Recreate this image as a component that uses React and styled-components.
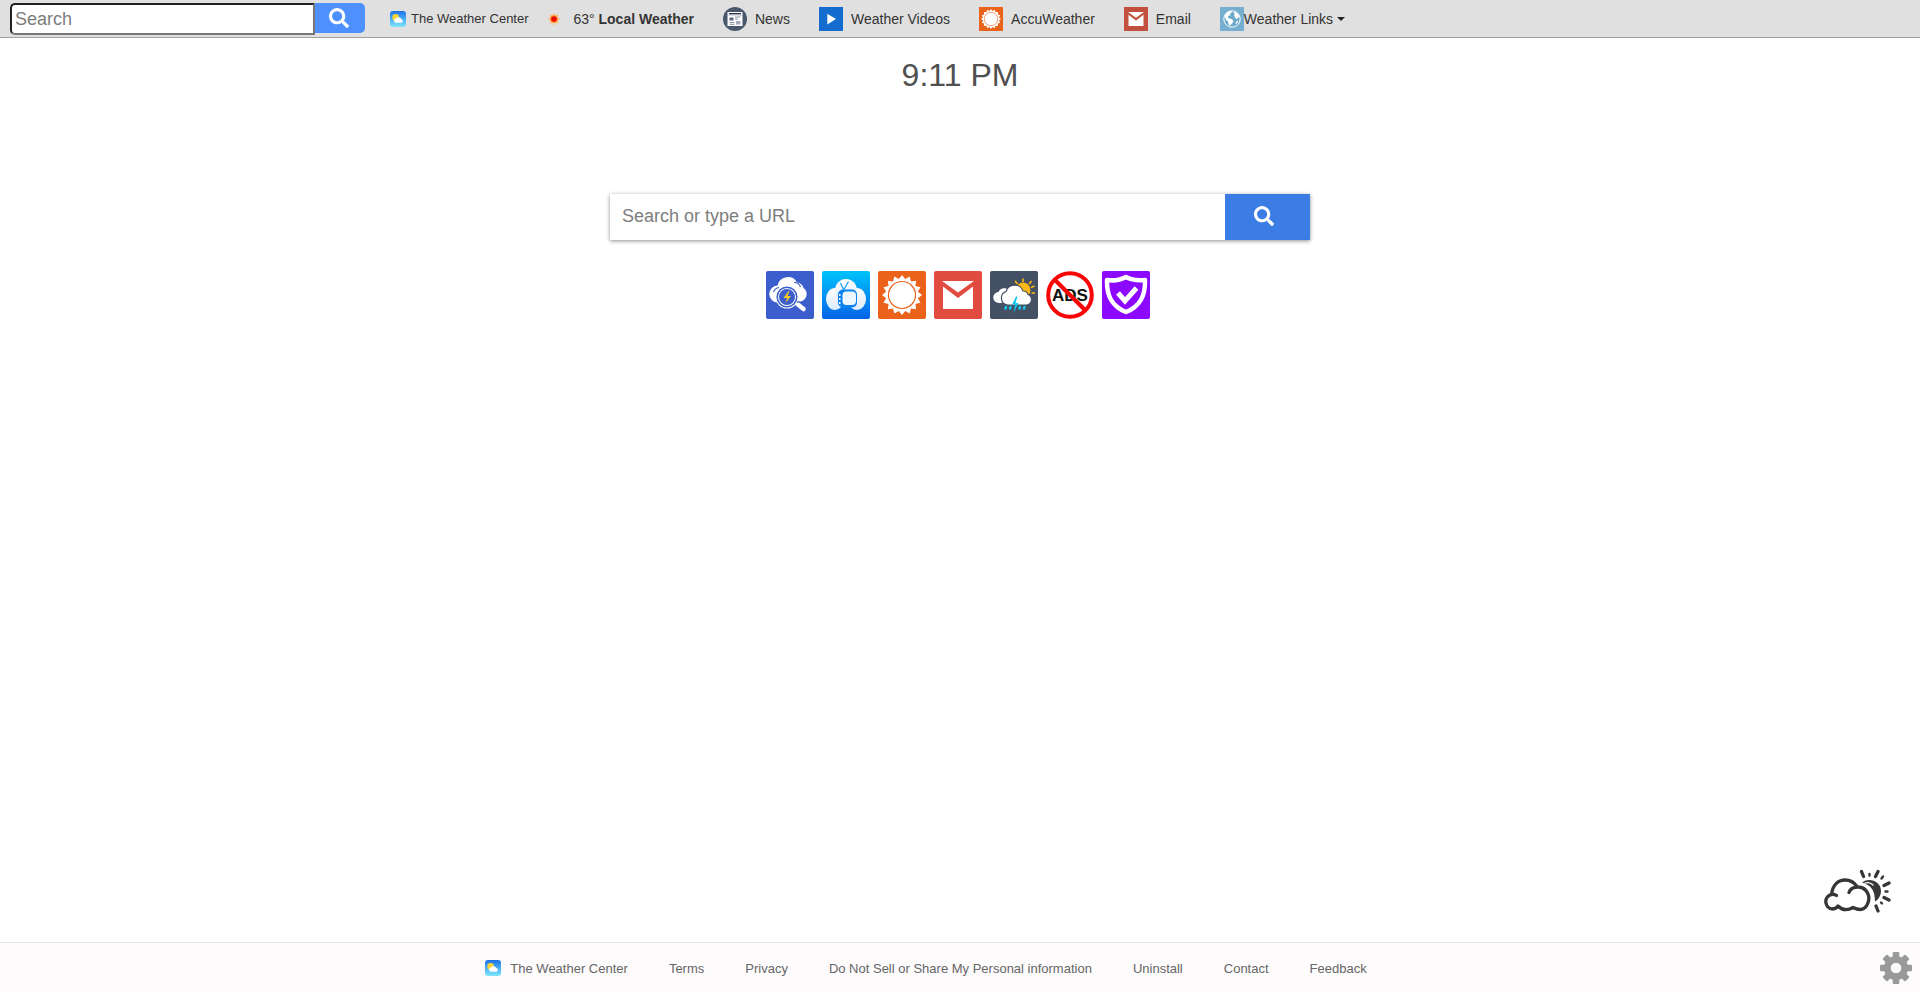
import React from 'react';
import styled, { createGlobalStyle } from 'styled-components';
import { FaSearch } from 'react-icons/fa';

const GlobalStyle = createGlobalStyle`
  * {
    box-sizing: border-box;
  }
  body {
    margin: 0;
    background-color: white;
    font-family: 'Liberation Sans', Arial, sans-serif;
  }
`;

const Page = styled.div`
  display: flex;
  flex-direction: column;
  min-height: 100vh;
`;

const Toolbar = styled.header`
  display: flex;
  align-items: center;
  height: 38px;
  padding-left: 10px;
  background-color: #e0e0e0;
  border-bottom: 1px solid #a0a0a0;
  color: #333;
`;

const BarForm = styled.form`
  display: flex;
  align-items: flex-start;
  margin-right: 25px;
`;

const BarInput = styled.input`
  width: 305px;
  height: 32px;
  padding: 2px 3px 0;
  border: 2px solid #767676;
  border-top-color: #212121;
  border-left-color: #212121;
  border-radius: 5px 0 0 5px;
  font-family: inherit;
  font-size: 18px;
  color: #333;
  &::placeholder {
    color: #7d7d7d;
  }
  &:focus {
    outline: none;
  }
`;

const BarButton = styled.button`
  display: flex;
  align-items: center;
  justify-content: center;
  width: 50px;
  height: 30px;
  padding: 0 2px 0 0;
  border: none;
  border-radius: 0 5px 5px 0;
  background-color: #4d90fe;
  color: white;
  font-size: 20px;
`;

const Brand = styled.a`
  display: flex;
  align-items: center;
  gap: ${props => props.$gap}px;
  color: inherit;
  font-size: 13px;
  text-decoration: none;
`;

const BarNav = styled.nav`
  display: flex;
  align-items: center;
  gap: 29px;
  margin-left: 17px;
`;

const BarLink = styled.a`
  display: flex;
  align-items: center;
  gap: ${props => (props.$tight ? 0 : 8)}px;
  color: #333;
  font-size: 14px;
  text-decoration: none;
  white-space: pre;
`;

const BarMenu = styled(BarLink).attrs({ as: 'button', type: 'button' })`
  padding: 0;
  border: none;
  background: none;
  font-family: inherit;
`;

const Caret = styled.span`
  margin-left: 4px;
  border: 4px solid transparent;
  border-top-color: #222;
  border-bottom: none;
`;

const Main = styled.main`
  flex: 1;
  display: flex;
  flex-direction: column;
  align-items: center;
`;

const Clock = styled.div`
  margin-top: 18px;
  color: #505050;
  font-size: 32px;
  line-height: 38px;
`;

const SearchForm = styled.form`
  display: flex;
  width: 700px;
  max-width: 100%;
  height: 46px;
  margin-top: 100px;
  box-shadow: 0 1px 4px rgba(0, 0, 0, 0.45);
`;

const SearchInput = styled.input`
  flex: 1;
  min-width: 0;
  padding: 0 12px 2px;
  border: none;
  font-family: inherit;
  font-size: 18px;
  color: #333;
  &::placeholder {
    color: #7d7d7d;
  }
  &:focus {
    outline: none;
  }
`;

const SearchButton = styled.button`
  display: flex;
  align-items: center;
  justify-content: center;
  width: 85px;
  padding: 0 8px 2px 0;
  border: none;
  background-color: #3b7de5;
  color: white;
  font-size: 20px;
`;

const Tiles = styled.div`
  display: flex;
  gap: 8px;
  margin-top: 31px;
  padding-right: 4px;
`;

const Tile = styled.a`
  width: 48px;
  height: 48px;
  border-radius: 2px;
  overflow: hidden;
`;

const Widget = styled.a`
  align-self: flex-end;
  margin: auto 29px 29px 0;
  line-height: 0;
`;

const Footer = styled.footer`
  display: flex;
  align-items: center;
  height: 51px;
  background-color: #fdfbfc;
  border-top: 1px solid #e5e5e5;
  color: #666;
`;

const FooterNav = styled.nav`
  flex: 1;
  display: flex;
  align-items: center;
  justify-content: center;
  gap: 41px;
  padding-right: 20px;
`;

const FooterLink = styled.a`
  color: inherit;
  font-size: 13px;
  text-decoration: none;
`;

const GearButton = styled.button`
  width: 48px;
  height: 48px;
  padding: 8px;
  border: none;
  background: none;
  line-height: 0;
`;

const Logo = ({ id }) => (
  <svg width="16" height="16" viewBox="0 0 16 16">
    <defs>
      <linearGradient id={id} x1="0" y1="0" x2="0" y2="1">
        <stop offset="0" stopColor="#1b70e6" />
        <stop offset="0.5" stopColor="#4aaef5" />
        <stop offset="1" stopColor="#80e6fb" />
      </linearGradient>
    </defs>
    <rect width="16" height="16" rx="3" fill={`url(#${id})`} />
    <circle cx="5.6" cy="6.4" r="3.3" fill="#fdd43a" />
    <path d="M6.200 11.800a2.200 2.200 0 0 1-.2-4.400A3 3 0 0 1 11.200 8a2 2 0 0 1 .3 3.800z" fill="#fff" />
  </svg>
);

const HotSun = () => (
  <svg width="16" height="12" viewBox="-2 0 16 12">
    {[0, 45, 90, 135].map(a => (
      <path key={a} d="M6 0v12" stroke="#ffb870" strokeWidth="1.3" transform={`rotate(${a} 6 6)`} />
    ))}
    <circle cx="6" cy="6" r="4" fill="#ff9d2e" />
    <circle cx="6" cy="6" r="2.800" fill="#e80c00" />
  </svg>
);

const NewsIcon = () => (
  <svg width="24" height="24" viewBox="0 0 24 24">
    <circle cx="12" cy="12" r="12" fill="#4a586c" />
    <path d="M4.500 5h15v14h-15z" fill="#fff" />
    <path d="M6 6.7h12" stroke="#27364d" strokeWidth="1.4" />
    <path d="M6.500 10.500h4v3h-4z" fill="#596980" />
    <path d="M12 10h5.500M12 12h3M6.500 15.500h5M6.500 17.300h5" stroke="#8a94a5" />
    <path d="M13 14h4.500v3.500H13z" fill="#a3acba" />
    <path d="M5 8.500h14" stroke="#cbd1da" strokeWidth=".7" />
  </svg>
);

const VideoIcon = () => (
  <svg width="24" height="24" viewBox="0 0 24 24">
    <path d="M0 0h24v24H0z" fill="#146dce" />
    <path d="M8.300 6.800l8.700 5.200-8.700 5.500z" fill="#fff" />
  </svg>
);

// sixteen points round a ringed disc
const sunPoints = Array.from({ length: 32 }, (_, i) => {
  const r = i % 2 ? 16.2 : 20;
  const a = (i * Math.PI) / 16;
  return `${24 + r * Math.sin(a)},${24 - r * Math.cos(a)}`;
}).join(' ');

const AccuIcon = ({ size }) => (
  <svg width={size} height={size} viewBox="0 0 48 48">
    <path d="M0 0h48v48H0z" fill="#eb621b" />
    <polygon points={sunPoints} fill="#fff" />
    <circle cx="24" cy="24" r="13.500" fill="#fff" stroke="#eb621b" strokeWidth="1.2" />
  </svg>
);

const MailIcon = ({ size, color }) => (
  <svg width={size} height={size} viewBox="0 0 48 48">
    <path d="M0 0h48v48H0z" fill={color} />
    <path d="M8 10h32L24 21.500z" fill="#fff" />
    <path d="M9 15.500l15 11.500 15-11.500V38H9z" fill="#fff" />
  </svg>
);

const GlobeIcon = () => (
  <svg width="24" height="24" viewBox="0 0 24 24">
    <path d="M0 0h24v24H0z" fill="#75afd0" />
    <circle cx="12" cy="12" r="8.200" fill="#6eaacb" stroke="#fff" strokeWidth="1" />
    <path d="M4.500 9C6 5.500 8.500 4 11 4l1 1.500-2 1 .5 1.500-2 1-1 1.500 2 1 2 .5 2 2-1 2-2 2-.5 1-1.500-2-.5-2.500L6 13z" fill="#fff" />
    <path d="M14 4.500l4 2.500 1.500 3-1.500.5-1 2-2-2-1-2 1-1.500-1.500-1zM17 14l1.500.5-2 2.500-1-1z" fill="#fff" />
  </svg>
);

const StormSearchIcon = () => (
  <svg width="48" height="48" viewBox="0 0 48 48">
    <path d="M0 0h48v48H0z" fill="#3c5dcc" />
    <path d="M12 31.500a8.500 8.500 0 0 1-.5-17A10.500 10.500 0 0 1 31 11.500a7.500 7.500 0 0 1 6.500 5.500A7.500 7.500 0 0 1 34 30.500z" fill="#fff" />
    <path d="M7.500 21q1.500-4 5.500-4.500M28 11.500q5 0 6.500 4.500" fill="none" stroke="#3c5dcc" strokeWidth="1.200" />
    <path d="M28 31.500l9 6" stroke="#3c5dcc" strokeWidth="7" />
    <path d="M29 32l3 2.500" stroke="#fff" strokeWidth="2.500" />
    <path d="M32.500 34l5 4" stroke="#fff" strokeWidth="4.500" strokeLinecap="round" />
    <circle cx="21" cy="26" r="11.500" fill="#fff" />
    <circle cx="21" cy="26" r="9.800" fill="#fff" stroke="#3c5dcc" strokeWidth="1.500" />
    <circle cx="21" cy="26" r="8" fill="#3c5dcc" />
    <path d="M22.500 20l-5 7h3.500l-1.500 5 5.500-7h-3.500l2-5z" fill="#f7c91e" />
  </svg>
);

const CloudTvIcon = () => (
  <svg width="48" height="48" viewBox="0 0 48 48">
    <defs>
      <linearGradient id="tvSky" x1="0" y1="0" x2="0" y2="1">
        <stop offset="0" stopColor="#00c3fb" />
        <stop offset="1" stopColor="#0563e8" />
      </linearGradient>
      <linearGradient id="tvCloud" x1="0" y1="0" x2="0" y2="1">
        <stop offset="0" stopColor="#fff" />
        <stop offset="1" stopColor="#dbebfd" />
      </linearGradient>
    </defs>
    <path d="M0 0h48v48H0z" fill="url(#tvSky)" />
    <g fill="url(#tvCloud)">
      <ellipse cx="13" cy="28" rx="9" ry="11" />
      <ellipse cx="35" cy="28" rx="9" ry="11" />
      <ellipse cx="24" cy="19.500" rx="11" ry="11.500" />
    </g>
    <path d="M18.500 12l3 6.500M26.500 10.500l-4.500 8" stroke="#109fef" strokeWidth="1.200" />
    <rect x="16" y="18.500" width="19" height="18" rx="5" fill="#0d84ed" />
    <rect x="20.500" y="20.500" width="13.500" height="13.500" rx="4" fill="#edf7ff" />
    <path d="M17 24h1.500M17 28h1.500M17 32h1.500" stroke="#fff" strokeWidth="2" />
  </svg>
);

const RainIcon = () => (
  <svg width="48" height="48" viewBox="0 0 48 48">
    <path d="M0 0h48v48H0z" fill="#445064" />
    <circle cx="33" cy="19" r="7.500" fill="#fcb814" />
    <path d="M33 7.500v3.500M41.500 10l-2.500 3M44.500 15l-3.500 1.500M45 22h-3.500M25 10l2.500 3" stroke="#fcb814" strokeWidth="1.600" />
    <path d="M9 32a5.500 5.500 0 0 1-.5-11A6.500 6.500 0 0 1 19 19l-3 13z" fill="#fff" />
    <path d="M17.500 34a7 7 0 0 1-1.500-13.500A9 9 0 0 1 33 20a5 5 0 0 1 5 3.500A5.500 5.500 0 0 1 37 34z" fill="#fff" stroke="#445064" strokeWidth="1.200" />
    <path d="M26 25.500l-4 8h3l-1.500 8.500 5-10h-3l2-6.500z" fill="#12c8ed" />
    <path d="M16 36l-.5 1.500M20.500 36l-.5 1.500M30 36l-.5 1.500M34.500 36l-.5 1.500" stroke="#12c8ed" strokeWidth="2.400" strokeLinecap="round" />
  </svg>
);

const NoAdsIcon = () => (
  <svg width="48" height="48" viewBox="0 0 48 48">
    <text
      x="24"
      y="30"
      textAnchor="middle"
      fontFamily="Liberation Sans, Arial, sans-serif"
      fontSize="17"
      fontWeight="700"
      fill="#111"
    >
      ADS
    </text>
    <circle cx="24" cy="24" r="21.800" fill="none" stroke="#f80606" strokeWidth="4" />
    <path d="M8.500 8.500l31 31" stroke="#f80606" strokeWidth="4" />
  </svg>
);

const ShieldIcon = () => (
  <svg width="48" height="48" viewBox="0 0 48 48">
    <path d="M0 0h48v48H0z" fill="#8d08ff" />
    <path d="M24 6q-8 4.500-19 3C4.500 24 9 35 24 41 39 35 43.500 24 43 9 32 10.500 24 6 24 6z" fill="none" stroke="#fff" strokeWidth="4.500" strokeLinejoin="round" />
    <path d="M16 22l7 8L34.500 17" fill="none" stroke="#fff" strokeWidth="5" />
  </svg>
);

const PartlyCloudyIcon = () => (
  <svg width="68" height="44" viewBox="0 0 68 44" fill="none" stroke="#363636" strokeWidth="3.300" strokeLinecap="round" strokeLinejoin="round">
    <path d="M8.500 25C10 15 16 11 22 11c5 0 9 2 12 6.500M13.500 26.500Q10 24 6 26.500A7.500 7.500 0 0 0 9 40q4 0 6-3 6.500 6.500 15 1.500 10 5 14-2.500c5-9-1-18-9-18-5 0-8 2.500-9 5.500" />
    <path d="M39 13.500C46 8 58 12 58 22c0 5-3 9-6 10.500C52 21 48 16 39 13.500z" fill="#363636" stroke="none" />
    <path d="M42 14q5-1.500 8 2" stroke="#fff" strokeWidth="1.200" />
    <path d="M38.500 2.500l2 5M55 2.500l-2.500 5M66 14l-5 2.500M66 31l-5-2.500M53 37l2 5" />
    <path d="M46.500 5v1.500M60 7.500l-1.500 2M62.500 22.500h2M58 33.500l1 1" strokeWidth="2.400" />
  </svg>
);

const GearIcon = () => (
  <svg width="32" height="32" viewBox="0 0 32 32">
    <g fill="#999">
      {[0, 45, 90, 135].map(a => (
        <rect key={a} x="12.700" width="6.600" height="32" rx="1" transform={`rotate(${a} 16 16)`} />
      ))}
      <circle cx="16" cy="16" r="12" />
    </g>
    <circle cx="16" cy="16" r="5.300" fill="#fdfbfc" />
  </svg>
);

const tiles = [
  { name: 'Weather Search', icon: <StormSearchIcon /> },
  { name: 'Weather Videos', icon: <CloudTvIcon /> },
  { name: 'AccuWeather', icon: <AccuIcon size={48} /> },
  { name: 'Email', icon: <MailIcon size={48} color="#e24b3f" /> },
  { name: 'Local Weather', icon: <RainIcon /> },
  { name: 'Ad Blocker', icon: <NoAdsIcon /> },
  { name: 'Security', icon: <ShieldIcon /> },
];

const footerLinks = [
  'Terms',
  'Privacy',
  'Do Not Sell or Share My Personal information',
  'Uninstall',
  'Contact',
  'Feedback',
];

class App extends React.Component {
  state = {
    barQuery: '',
    query: '',
  };

  inputChange = (value, field) => {
    this.setState({ [field]: value });
  };

  submitHandler = (e) => {
    e.preventDefault();
  };

  render() {
    return (
      <Page>
        <GlobalStyle />
        <Toolbar>
          <BarForm onSubmit={this.submitHandler}>
            <BarInput
              type="text"
              aria-label="Search"
              placeholder="Search"
              value={this.state.barQuery}
              onChange={e => this.inputChange(e.target.value, 'barQuery')}
            />
            <BarButton aria-label="Search"><FaSearch /></BarButton>
          </BarForm>
          <Brand $gap={5} href="#home">
            <Logo id="barLogo" />
            The Weather Center
          </Brand>
          <BarNav>
            <BarLink href="#local">
              <HotSun />
              <span> 63° <b>Local Weather</b></span>
            </BarLink>
            <BarLink href="#news"><NewsIcon />News</BarLink>
            <BarLink href="#videos"><VideoIcon />Weather Videos</BarLink>
            <BarLink href="#accuweather"><AccuIcon size={24} />AccuWeather</BarLink>
            <BarLink href="#email"><MailIcon size={24} color="#c2503f" />Email</BarLink>
            <BarMenu $tight><GlobeIcon />Weather Links<Caret /></BarMenu>
          </BarNav>
        </Toolbar>

        <Main>
          <Clock>9:11 PM</Clock>
          <SearchForm onSubmit={this.submitHandler}>
            <SearchInput
              type="text"
              aria-label="Search or type a URL"
              placeholder="Search or type a URL"
              value={this.state.query}
              onChange={e => this.inputChange(e.target.value, 'query')}
            />
            <SearchButton aria-label="Search"><FaSearch /></SearchButton>
          </SearchForm>
          <Tiles>
            {tiles.map(tile => (
              <Tile key={tile.name} href="#tile" aria-label={tile.name}>{tile.icon}</Tile>
            ))}
          </Tiles>
          <Widget href="#forecast" aria-label="Forecast"><PartlyCloudyIcon /></Widget>
        </Main>

        <Footer>
          <FooterNav>
            <Brand $gap={9} href="#home">
              <Logo id="footerLogo" />
              The Weather Center
            </Brand>
            {footerLinks.map(link => (
              <FooterLink key={link} href="#footer">{link}</FooterLink>
            ))}
          </FooterNav>
          <GearButton aria-label="Settings"><GearIcon /></GearButton>
        </Footer>
      </Page>
    );
  }
}

export default App;
